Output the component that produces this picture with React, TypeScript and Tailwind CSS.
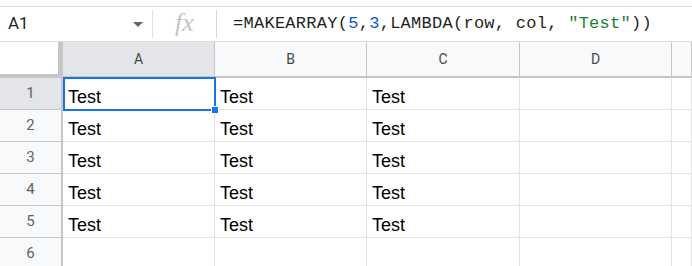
import React from 'react';

const cols = ['A', 'B', 'C', 'D', ''];
const rows = [1, 2, 3, 4, 5, 6];

const App: React.FC = () => {
  return (
    <div className="w-[692px] h-[266px] overflow-hidden bg-white" style={{ fontFamily: 'Arial, "Liberation Sans", sans-serif' }}>
      <div className="h-[6px]" />
      {/* formula bar */}
      <div className="flex items-center h-[36px] border-t border-b border-[#dadce0]">
        <div className="w-[152px] flex items-center justify-between pl-[8px] pr-[9px] text-[17px] text-[#1f1f1f] font-['Roboto','Liberation_Sans',sans-serif]">
          <span>A1</span>
          <svg width="10" height="6" viewBox="0 0 10 6" className="mt-[1px]">
            <path d="M0 0h10L5 5z" fill="#5f6368" />
          </svg>
        </div>
        <div className="w-px h-[28px] bg-[#e3e3e3]" />
        <div className="w-[63px] flex justify-center">
          <span className="text-[26px] italic text-[#c4c4c4] font-['Liberation_Serif',serif] leading-none pb-[2px]">fx</span>
        </div>
        <div className="w-px h-[28px] bg-[#d6d6d6]" />
        <div className="pl-[16px] text-[17px] text-[#1f1f1f] tracking-[0.27px] font-['Liberation_Mono','DejaVu_Sans_Mono',monospace]">
          =MAKEARRAY(<span className="text-[#1155cc]">5</span>,<span className="text-[#1155cc]">3</span>,LAMBDA(row, col, <span className="text-[#188038]">"Test"</span>))
        </div>
      </div>

      {/* grid */}
      <div className="relative grid grid-cols-[63px_152px_152px_153px_152px_1fr]">
        {/* header row */}
        <div className="h-[36px] bg-white border-r-[5px] border-b-[4px] border-[#c4c7c5]" />
        {cols.map((c, i) => (
          <div
            key={c + i}
            className={
              'h-[36px] flex items-center justify-center text-[14px] text-[#444746] border-r border-b-2 border-r-[#c4c7c5] border-b-[#c4c7c5] font-[Roboto,sans-serif] ' +
              (i === 0 ? 'bg-[#e3e5e8]' : 'bg-[#f8f9fa]')
            }
          >
            {c}
          </div>
        ))}

        {rows.map((r) => (
          <React.Fragment key={r}>
            <div
              className={
                'h-[32px] flex items-center justify-center text-[15px] text-[#5f6368] border-r-2 border-b border-r-[#c4c7c5] border-b-[#c4c7c5] font-[Roboto,sans-serif] ' +
                (r === 1 ? 'bg-[#e3e5e8]' : 'bg-[#f8f9fa]')
              }
            >
              {r}
            </div>
            {cols.map((c, i) => (
              <div
                key={c + i}
                className="h-[32px] flex items-end pl-[5px] pb-[1px] text-[18px] leading-[21px] text-black border-r border-b border-[#e2e2e2]"
              >
                {r <= 5 && i < 3 ? 'Test' : ''}
              </div>
            ))}
          </React.Fragment>
        ))}

        {/* selection */}
        <div className="absolute left-[63px] top-[35px] w-[153px] h-[34px] border-2 border-[#1a73e8] pointer-events-none" />
        <div className="absolute left-[211px] top-[64px] w-[8px] h-[8px] bg-[#1a73e8] border border-white" />
      </div>
    </div>
  );
};

export default App;
